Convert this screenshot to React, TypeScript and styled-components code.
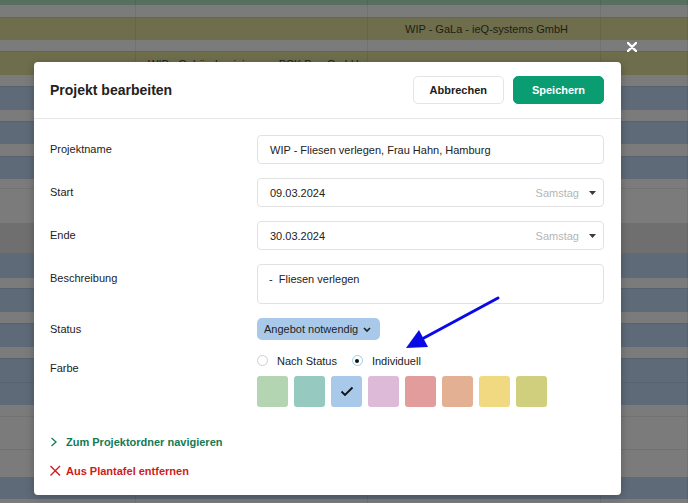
import styled, { createGlobalStyle } from 'styled-components';

type Tone = 'green' | 'gray' | 'olive' | 'blue' | 'dark';

interface Band {
  h: number;
  tone: Tone;
  line?: boolean;
  text?: { col: number; label: string };
}

const tones: Record<Tone, string> = {
  green: '#566f5f',
  gray: '#7b7b7b',
  olive: '#6e6d4c',
  blue: '#5e6a78',
  dark: '#6f6f6f',
};

const bands: Band[] = [
  { h: 5, tone: 'green' },
  { h: 12, tone: 'gray' },
  { h: 23, tone: 'olive', line: true, text: { col: 2, label: 'WIP - GaLa - ieQ-systems GmbH' } },
  { h: 11, tone: 'gray' },
  { h: 24, tone: 'olive', line: true, text: { col: 1, label: 'WIP - Gebäudereinigung - PCK Bau GmbH' } },
  { h: 11, tone: 'gray' },
  { h: 24, tone: 'blue', line: true },
  { h: 11, tone: 'gray' },
  { h: 23, tone: 'blue', line: true },
  { h: 12, tone: 'gray' },
  { h: 23, tone: 'blue', line: true },
  { h: 9, tone: 'gray' },
  { h: 35, tone: 'gray', line: true },
  { h: 30, tone: 'dark' },
  { h: 25, tone: 'blue' },
  { h: 10, tone: 'gray' },
  { h: 24, tone: 'blue', line: true },
  { h: 11, tone: 'gray' },
  { h: 24, tone: 'blue', line: true },
  { h: 11, tone: 'gray' },
  { h: 24, tone: 'blue', line: true },
  { h: 23, tone: 'blue', line: true },
  { h: 11, tone: 'gray' },
  { h: 33, tone: 'gray', line: true },
  { h: 28, tone: 'gray', line: true },
  { h: 22, tone: 'blue' },
  { h: 10, tone: 'gray' },
];

const swatches = ['#b4d5b1', '#96cac1', '#a9c9ea', '#ddbad7', '#e29c9b', '#e3b093', '#f0d981', '#d0cf7d'];

const GlobalStyle = createGlobalStyle`
  * { box-sizing: border-box; }
  body {
    margin: 0;
    font-family: 'Liberation Sans', Arial, sans-serif;
    color: #222;
  }
`;

export default function App() {
  return (
    <>
      <GlobalStyle />
      <Page>
        <Planner>
          {bands.map((band, i) => (
            <BandRow key={i} $h={band.h} $tone={band.tone} $line={band.line}>
              {[0, 1, 2, 3].map((col) => (
                <BandCell key={col} $pad={col === 2 ? 37 : 12}>
                  {band.text?.col === col ? band.text.label : null}
                </BandCell>
              ))}
            </BandRow>
          ))}
        </Planner>

        <CloseButton aria-label="Schließen">
          <svg width="10" height="10" viewBox="0 0 10 10">
            <path d="M1 1 L9 9 M9 1 L1 9" stroke="#fff" strokeWidth="2.4" strokeLinecap="round" />
          </svg>
        </CloseButton>

        <Modal>
          <ModalHeader>
            <Title>Projekt bearbeiten</Title>
            <HeaderActions>
              <Button>Abbrechen</Button>
              <Button $primary>Speichern</Button>
            </HeaderActions>
          </ModalHeader>

          <ModalBody>
            <Form>
              <Label>Projektname</Label>
              <Field>WIP - Fliesen verlegen, Frau Hahn, Hamburg</Field>

              <Label>Start</Label>
              <DateField>
                09.03.2024
                <Weekday>Samstag</Weekday>
                <Caret />
              </DateField>

              <Label>Ende</Label>
              <DateField>
                30.03.2024
                <Weekday>Samstag</Weekday>
                <Caret />
              </DateField>

              <Label $top={8}>Beschreibung</Label>
              <TextBox>{'-  Fliesen verlegen'}</TextBox>

              <Label>Status</Label>
              <div>
                <StatusBadge>
                  Angebot notwendig
                  <svg width="8" height="5" viewBox="0 0 8 5">
                    <path d="M1 1 L4 4 L7 1" fill="none" stroke="#222" strokeWidth="1.7" />
                  </svg>
                </StatusBadge>
              </div>

              <Label $top={8}>Farbe</Label>
              <ColorPicker>
                <RadioRow>
                  <RadioOption>
                    <Radio />
                    Nach Status
                  </RadioOption>
                  <RadioOption>
                    <Radio $checked />
                    Individuell
                  </RadioOption>
                </RadioRow>
                <SwatchRow>
                  {swatches.map((c, i) => (
                    <Swatch key={c} $color={c}>
                      {i === 2 && (
                        <svg width="14" height="11" viewBox="0 0 14 11">
                          <path d="M1.5 5.5 L5 9 L12.5 1.5" fill="none" stroke="#111" strokeWidth="1.8" />
                        </svg>
                      )}
                    </Swatch>
                  ))}
                </SwatchRow>
              </ColorPicker>
            </Form>

            <Links>
              <ActionLink $tone="green">
                <LinkIcon viewBox="0 0 12 12">
                  <path d="M1.5 2 L6 6 L1.5 10" fill="none" stroke="currentColor" strokeWidth="1.3" />
                </LinkIcon>
                Zum Projektordner navigieren
              </ActionLink>
              <ActionLink $tone="red">
                <LinkIcon viewBox="0 0 12 12">
                  <path d="M0.5 1 L10 10.5 M10 1 L0.5 10.5" fill="none" stroke="currentColor" strokeWidth="1.4" />
                </LinkIcon>
                Aus Plantafel entfernen
              </ActionLink>
            </Links>
          </ModalBody>
        </Modal>

        <Annotation viewBox="0 0 688 503">
          <line x1="498" y1="298" x2="422" y2="339" stroke="#0a0ae6" strokeWidth="3" strokeLinecap="round" />
          <polygon points="406,348 419,330 428,347" fill="#0a0ae6" />
        </Annotation>
      </Page>
    </>
  );
}

const Caret = () => (
  <CaretIcon width="7" height="4" viewBox="0 0 7 4">
    <path d="M0 0 H7 L3.5 4 Z" fill="#3a3a3a" />
  </CaretIcon>
);

const Page = styled.div`
  position: relative;
  width: 688px;
  height: 503px;
  overflow: hidden;
  background: #7b7b7b;
`;

const Planner = styled.div`
  display: flex;
  flex-direction: column;
`;

const BandRow = styled.div<{ $h: number; $tone: Tone; $line?: boolean }>`
  flex-shrink: 0;
  display: grid;
  grid-template-columns: 136px 232px 233px 1fr;
  height: ${(p) => p.$h}px;
  background: ${(p) => tones[p.$tone]};
  border-top: ${(p) => (p.$line ? '1px solid rgba(0, 0, 0, 0.07)' : 'none')};
`;

const BandCell = styled.div<{ $pad: number }>`
  display: flex;
  align-items: center;
  padding-left: ${(p) => p.$pad}px;
  border-right: 1px solid rgba(0, 0, 0, 0.07);
  font-size: 11px;
  color: #1d1d15;
  white-space: nowrap;
  overflow: hidden;
`;

const CloseButton = styled.button`
  position: absolute;
  left: 627px;
  top: 42px;
  width: 10px;
  height: 10px;
  padding: 0;
  border: none;
  background: none;
  display: flex;
`;

const Modal = styled.div`
  position: absolute;
  left: 34px;
  top: 62px;
  width: 587px;
  height: 433px;
  background: #fff;
  border-radius: 4px;
  box-shadow: 0 2px 8px rgba(0, 0, 0, 0.25);
  display: flex;
  flex-direction: column;
`;

const ModalHeader = styled.div`
  height: 57px;
  padding: 0 17px 0 16px;
  display: flex;
  align-items: center;
  justify-content: space-between;
  border-bottom: 1px solid #e6e6e6;
`;

const Title = styled.h2`
  margin: 0;
  font-size: 14px;
  font-weight: 700;
  color: #222;
`;

const HeaderActions = styled.div`
  display: flex;
  gap: 9px;
`;

const Button = styled.button<{ $primary?: boolean }>`
  height: 28px;
  min-width: 91px;
  padding: 0 16px;
  border-radius: 5px;
  font-family: inherit;
  font-size: 11px;
  font-weight: 700;
  border: 1px solid ${(p) => (p.$primary ? '#0a9d72' : '#e4e4e4')};
  background: ${(p) => (p.$primary ? '#0a9d72' : '#fff')};
  color: ${(p) => (p.$primary ? '#fff' : '#1b1b1b')};
`;

const ModalBody = styled.div`
  padding: 16px 17px 0 16px;
  display: flex;
  flex-direction: column;
`;

const Form = styled.div`
  display: grid;
  grid-template-columns: 207px 347px;
  row-gap: 14px;
  align-items: center;
`;

const Label = styled.div<{ $top?: number }>`
  font-size: 11px;
  line-height: 13px;
  color: #222;
  align-self: ${(p) => (p.$top !== undefined ? 'start' : 'center')};
  padding-top: ${(p) => p.$top ?? 0}px;
`;

const Field = styled.div`
  height: 29px;
  padding: 0 12px;
  display: flex;
  align-items: center;
  border: 1px solid #e2e2e2;
  border-radius: 4px;
  font-size: 11px;
  color: #222;
`;

const DateField = styled(Field)`
  padding-right: 7px;
`;

const Weekday = styled.span`
  margin-left: auto;
  color: #b5b5b5;
`;

const CaretIcon = styled.svg`
  margin-left: 10px;
`;

const TextBox = styled(Field)`
  height: 40px;
  padding: 8px 11px 0;
  align-items: flex-start;
  line-height: 13px;
  white-space: pre;
`;

const StatusBadge = styled.span`
  display: inline-flex;
  align-items: center;
  gap: 5px;
  height: 22px;
  padding: 0 9px 0 7px;
  border-radius: 5px;
  background: #a9c9ea;
  font-size: 11px;
  color: #1e1e1e;
`;

const ColorPicker = styled.div`
  display: flex;
  flex-direction: column;
  gap: 9px;
`;

const RadioRow = styled.div`
  display: flex;
  align-items: center;
  height: 13px;
  gap: 15px;
`;

const RadioOption = styled.label`
  display: flex;
  align-items: center;
  gap: 9px;
  font-size: 11px;
  color: #222;
`;

const Radio = styled.span<{ $checked?: boolean }>`
  width: 11px;
  height: 11px;
  border-radius: 50%;
  background: #fff;
  border: 1px solid ${(p) => (p.$checked ? '#9dcde6' : '#cfcfcf')};
  display: flex;
  align-items: center;
  justify-content: center;

  &::after {
    content: '';
    width: 4px;
    height: 4px;
    border-radius: 50%;
    background: ${(p) => (p.$checked ? '#111' : 'transparent')};
  }
`;

const SwatchRow = styled.div`
  display: flex;
  gap: 6px;
`;

const Swatch = styled.div<{ $color: string }>`
  width: 31px;
  height: 31px;
  border-radius: 3px;
  background: ${(p) => p.$color};
  display: flex;
  align-items: center;
  justify-content: center;
`;

const Links = styled.div`
  margin-top: 27px;
  display: flex;
  flex-direction: column;
  gap: 13px;
`;

const ActionLink = styled.a<{ $tone: 'green' | 'red' }>`
  display: flex;
  align-items: center;
  gap: 4px;
  height: 16px;
  font-size: 11px;
  font-weight: 700;
  color: ${(p) => (p.$tone === 'green' ? '#137a54' : '#cf1b1b')};
  cursor: pointer;
`;

const LinkIcon = styled.svg`
  width: 12px;
  height: 12px;
  flex-shrink: 0;
`;

const Annotation = styled.svg`
  position: absolute;
  left: 0;
  top: 0;
  width: 688px;
  height: 503px;
  pointer-events: none;
`;
